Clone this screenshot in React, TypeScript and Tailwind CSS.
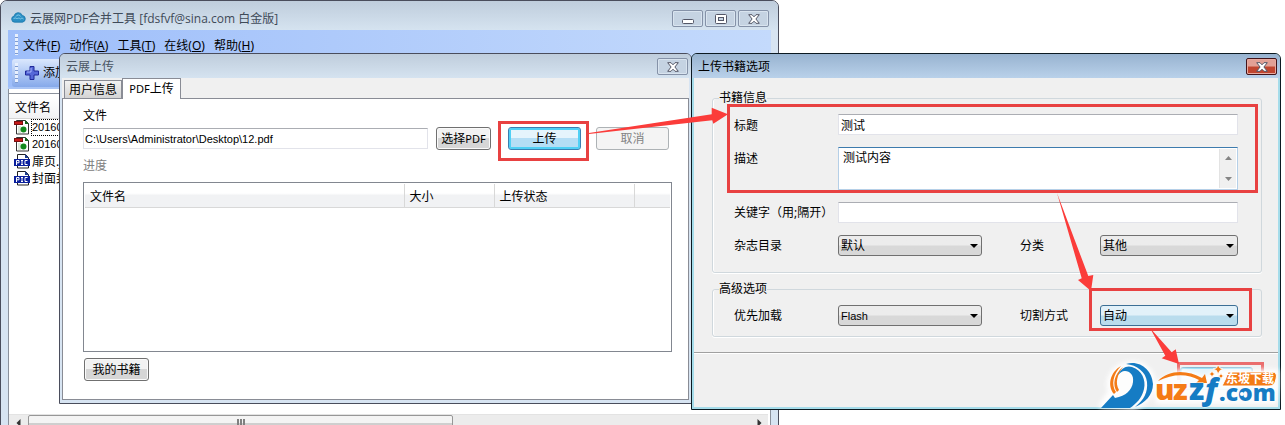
import React from "react";

type Option = { id: string; label: string; value: string; active?: boolean };

const MENUS = [
  { label: "文件", hotkey: "F" },
  { label: "动作", hotkey: "A" },
  { label: "工具", hotkey: "T" },
  { label: "在线", hotkey: "O" },
  { label: "帮助", hotkey: "H" },
];

const FILES = [
  { name: "201603", kind: "pdf", focused: true },
  { name: "201603", kind: "pdf", focused: false },
  { name: "扉页.jpg", kind: "pic", focused: false },
  { name: "封面封底", kind: "pic", focused: false },
];

const uiFont = "font-['Noto_Sans','Noto_Sans_CJK_SC',sans-serif]";
const latinFont = "font-['Liberation_Sans','Noto_Sans_CJK_SC',sans-serif]";

const buttonBase = "h-[23px] rounded-[3px] border text-center text-xs leading-4";
const plainButton =
  "border-[#707070] bg-linear-to-b from-[#f2f2f2] from-50% to-[#d6d6d6] to-50% shadow-[inset_0_0_0_1px_#fafafa]";
const fieldClass =
  "w-full border border-[#e2e3ea] border-t-[#abadb3] bg-white leading-4 text-black outline-none";

function CloseGlyph() {
  return (
    <svg width="12" height="10" viewBox="0 0 12 10" aria-hidden="true">
      <path
        d="M0.7 0.7H4L6 2.8L8 0.7H11.3L7.9 5L11.3 9.3H8L6 7.2L4 9.3H0.7L4.1 5Z"
        fill="#fff"
        stroke="#535666"
        strokeWidth="1"
      />
    </svg>
  );
}

function CaptionButton({
  label,
  danger,
  children,
}: {
  label: string;
  danger?: boolean;
  children: React.ReactNode;
}) {
  return (
    <button
      aria-label={label}
      className={`flex h-[17px] w-[31px] items-center justify-center rounded-[2px] border ${
        danger
          ? "border-[#43141a] bg-linear-to-b from-[#e2a095] from-45% to-[#c0452f] to-55% shadow-[inset_0_0_0_1px_#e8aaa0]"
          : "border-[#8592a8] bg-[#c5d3e2] shadow-[inset_0_0_0_1px_#d9e4ef]"
      }`}
    >
      {children}
    </button>
  );
}

function CloudIcon() {
  return (
    <svg width="15" height="11" viewBox="0 0 15 11" aria-hidden="true">
      <path
        d="M3.6 10.2A3.1 3.1 0 0 1 3 4.1A4.4 4.4 0 0 1 11.4 3.5A3.4 3.4 0 0 1 11.5 10.2Z"
        fill="#2b8fc4"
        stroke="#1c77ab"
        strokeWidth="0.8"
      />
      <path
        d="M2.5 7A2 2 0 0 1 6 7A2 2 0 0 1 9.300 7A2 2 0 0 1 12.500 7M5 4.500A2.500 2.500 0 0 1 9.600 4.500"
        fill="none"
        stroke="#8fd0ec"
        strokeWidth="0.9"
      />
    </svg>
  );
}

function PdfIcon() {
  return (
    <svg width="16" height="16" viewBox="0 0 16 16" aria-hidden="true">
      <path d="M2.5 1.5H11.5L14.5 4.5V15H2.5Z" fill="#fff" stroke="#333" />
      <path d="M11 1V5H15Z" fill="#15651c" />
      <path d="M4 7H7V14H4Z" fill="#dbe8db" />
      <rect x="0.5" y="2.5" width="8" height="3" fill="#c61a1a" stroke="#7a1010" />
      <circle cx="9.5" cy="10.5" r="3" fill="#128a1c" />
    </svg>
  );
}

function PicIcon() {
  return (
    <svg width="16" height="16" viewBox="0 0 16 16" aria-hidden="true">
      <path d="M3.5 1.5H11.5L14.5 4.5V15H3.5Z" fill="#fff" stroke="#222" />
      <path d="M11 1V5H15Z" fill="#1c3c8c" />
      <rect x="0" y="6" width="16" height="7" fill="#0a1f9c" />
      <path d="M2.5 12V7.5H5V9.8H2.5M8 7V12M7 7.5H9M7 11.5H9M13.5 7.5H11V11.5H13.5" fill="none" stroke="#fff" />
    </svg>
  );
}

function Grip() {
  return <span className="my-1 w-[3px] self-stretch bg-[repeating-linear-gradient(to_bottom,#e8f0fd_0_3px,#7d9ad0_3px_4px)]" />;
}

function MainWindow() {
  return (
    <section className="absolute left-0 top-0 flex h-[440px] w-[779px] flex-col rounded-t-[7px] border border-[#4a4d5c] bg-[#d7e4f2] px-[7px] pb-[7px]">
      <header className="-mx-[7px] flex h-[29px] shrink-0 items-start gap-1 rounded-t-[6px] bg-linear-to-b from-[#bfcddc] to-[#d5e3f0] pl-[10px] pr-[9px] pt-[9px]">
        <span className="pt-[2px]">
          <CloudIcon />
        </span>
        <h1 className="flex-1 pt-px text-xs leading-4 text-[#3f4a58] font-['Open_Sans','Noto_Sans_CJK_SC',sans-serif]">
          云展网PDF合并工具 [fdsfvf@sina.com 白金版]
        </h1>
        <div className="flex gap-[2px]">
          <CaptionButton label="最小化">
            <svg width="12" height="10" viewBox="0 0 12 10" aria-hidden="true">
              <rect x="0.5" y="5.5" width="11" height="4" rx="1" fill="#fff" stroke="#535666" />
            </svg>
          </CaptionButton>
          <CaptionButton label="最大化">
            <svg width="12" height="10" viewBox="0 0 12 10" aria-hidden="true">
              <rect x="0.5" y="0.5" width="11" height="9" rx="1" fill="#fff" stroke="#535666" />
              <rect x="3.5" y="3.5" width="5" height="3" fill="#c5d3e2" stroke="#535666" />
            </svg>
          </CaptionButton>
          <CaptionButton label="关闭">
            <CloseGlyph />
          </CaptionButton>
        </div>
      </header>

      <div className="flex shrink-0 flex-col bg-linear-to-r from-[#9ebefa] to-[#c4dafc]">
        <nav className="flex h-[29px] items-center pl-[7px]">
          <Grip />
          <div className="flex gap-[9px] pl-[5px] pt-[2px]">
            {MENUS.map((menu) => (
              <button key={menu.hotkey} className="text-xs leading-4">
                {menu.label}(<u>{menu.hotkey}</u>)
              </button>
            ))}
          </div>
        </nav>
        <div className="ml-1 flex h-[28px] items-center rounded-l-[3px] bg-linear-to-b from-[#dbe8fd] to-[#86a9ea] pl-[3px]">
          <Grip />
          <button className="flex items-center gap-1 pl-[7px] text-xs leading-4">
            <svg width="14" height="14" viewBox="0 0 14 14" aria-hidden="true">
              <path d="M5 0.5H9V5H13.5V9H9V13.5H5V9H0.5V5H5Z" fill="#5568d8" stroke="#20299a" />
              <path d="M6 2V6H2" fill="none" stroke="#aab8ff" />
            </svg>
            添加
          </button>
        </div>
        <div className="h-[2px] bg-[#a9c4f5]" />
      </div>

      <div className="flex min-h-0 flex-1 flex-col border border-t-0 border-[#8b919c] bg-white">
        <div className="mt-1 h-px bg-[#8b919c]" />
        <table className="mt-[3px] w-full text-left text-xs leading-4">
          <thead>
            <tr className="h-[21px] bg-linear-to-b from-white to-[#f1f2f4]">
              <th className="border-b border-[#d5d5d5] p-0 pl-[6px] pt-[2px] font-normal">文件名</th>
            </tr>
          </thead>
          <tbody>
            {FILES.map((file, index) => (
              <tr key={index} className="h-[17px]">
                <td className="p-0 pl-[5px]">
                  <span className="flex items-center gap-px">
                    {file.kind === "pdf" ? <PdfIcon /> : <PicIcon />}
                    <span
                      className={`leading-[15px] ${
                        file.kind === "pdf" ? `text-[11px] ${latinFont}` : "text-xs"
                      } ${file.focused ? "border border-dotted border-black" : "p-px"}`}
                    >
                      {file.name}
                    </span>
                  </span>
                </td>
              </tr>
            ))}
          </tbody>
        </table>
        <div className="mr-[2px] mt-auto flex h-[17px] items-stretch border-t border-[#e3e3e3] bg-[#ececec]">
          <button aria-label="向左滚动" className="flex w-[19px] items-center justify-center">
            <svg width="5" height="8" viewBox="0 0 5 8" aria-hidden="true">
              <path d="M4.5 0V8L0.5 4Z" fill="#333" />
            </svg>
          </button>
          <span className="flex w-[425px] items-start justify-center gap-px rounded-[2px] border border-[#979797] bg-linear-to-b from-[#f4f4f4] from-50% to-[#cfcfcf] to-50% pt-[3px]">
            <span className="h-2 w-[2px] bg-[#808080]" />
            <span className="h-2 w-[2px] bg-[#808080]" />
            <span className="h-2 w-[2px] bg-[#808080]" />
          </span>
          <button aria-label="向右滚动" className="ml-auto flex w-[17px] items-center justify-center">
            <svg width="5" height="8" viewBox="0 0 5 8" aria-hidden="true">
              <path d="M0.5 0V8L4.5 4Z" fill="#333" />
            </svg>
          </button>
        </div>
      </div>
    </section>
  );
}

function UploadDialog() {
  const headCell = "border-b border-[#d8d8d8] p-0 pl-[5px] pt-[3px] font-normal";
  return (
    <section className="absolute left-[59px] top-[53px] flex h-[351px] w-[633px] flex-col rounded-t-[6px] border border-[#4a4d5c] bg-[#d7e4f2] px-[2px] pb-[3px]">
      <header className="-mx-[2px] flex h-[24px] shrink-0 items-start justify-between rounded-t-[5px] bg-linear-to-b from-[#bfcddc] to-[#d5e3f0] pl-[6px] pr-[3px] pt-1">
        <h2 className="pt-px text-xs leading-4 text-[#4a5563]">云展上传</h2>
        <CaptionButton label="关闭">
          <CloseGlyph />
        </CaptionButton>
      </header>
      <div role="tablist" className="flex h-[20px] shrink-0 items-end bg-[#f0f0f0] pl-[2px]">
        <button
          role="tab"
          aria-selected="false"
          className="h-[18px] w-[58px] border border-b-0 border-[#898c95] bg-linear-to-b from-[#f2f2f2] to-[#d4d4d4] pt-px text-xs leading-4"
        >
          用户信息
        </button>
        <button
          role="tab"
          aria-selected="true"
          className="relative -mb-px h-[21px] w-[59px] border border-b-0 border-[#898c95] bg-white text-xs leading-4"
        >
          <span className="text-[11px]">PDF</span>上传
        </button>
      </div>
      <div className="flex min-h-0 flex-1 flex-col border border-[#898c95] bg-white pb-[18px] pl-[20px] pr-[16px] pt-[9px]">
        <label htmlFor="path" className="text-xs leading-4">
          文件
        </label>
        <div className="mt-[3px] flex items-center">
          <input
            id="path"
            defaultValue="C:\Users\Administrator\Desktop\12.pdf"
            className={`${fieldClass} ${latinFont} mr-2 h-[21px] min-w-0 flex-1 px-px text-[11px]`}
          />
          <button className={`${buttonBase} ${plainButton} mr-[17px] w-[55px]`}>
            选择<span className="text-[11px]">PDF</span>
          </button>
          <button
            className={`${buttonBase} mr-[15px] w-[73px] border-[#3c7fb1] bg-linear-to-b from-[#e5f4fc] from-50% to-[#b5def5] to-50% shadow-[inset_0_0_0_2px_#4fd0f5]`}
          >
            上传
          </button>
          <button disabled className={`${buttonBase} mr-[3px] w-[73px] border-[#adb2b5] bg-[#f4f4f4] text-[#838383]`}>
            取消
          </button>
        </div>
        <p className="mt-2 text-xs leading-4 text-[#808080]">进度</p>
        <div className="mt-2 flex-1 border border-[#828790] p-px">
          <table className="w-full table-fixed text-left text-xs leading-4">
            <colgroup>
              <col />
              <col className="w-[90px]" />
              <col className="w-[140px]" />
              <col className="w-[36px]" />
            </colgroup>
            <thead>
              <tr className="h-[23px] bg-linear-to-b from-white from-40% to-[#f1f2f4] to-50%">
                <th className={`${headCell} border-r`}>文件名</th>
                <th className={`${headCell} border-r`}>大小</th>
                <th className={`${headCell} border-r`}>上传状态</th>
                <th className={headCell} />
              </tr>
            </thead>
            <tbody />
          </table>
        </div>
        <button className={`${buttonBase} ${plainButton} ml-px mt-[6px] w-[65px] shrink-0`}>我的书籍</button>
      </div>
    </section>
  );
}

function Dropdown({ id, label, value, active }: Option) {
  const latin = /^[\x20-\x7e]+$/.test(value);
  return (
    <>
      <label htmlFor={id} className="text-xs leading-4">
        {label}
      </label>
      <div className="relative">
        <select
          id={id}
          defaultValue={value}
          className={`h-[21px] w-full appearance-none rounded-[3px] border pl-[2px] leading-4 text-black outline-none ${
            latin ? `text-[11px] ${latinFont}` : "text-xs"
          } ${
            active
              ? "border-[#3c6f95] bg-linear-to-b from-[#e2f1f9] from-45% to-[#b9dced] to-55%"
              : "border-[#707070] bg-linear-to-b from-[#ececec] from-45% to-[#d8d8d8] to-55%"
          }`}
        >
          <option>{value}</option>
        </select>
        <svg className="pointer-events-none absolute right-1 top-[9px]" width="8" height="4" viewBox="0 0 8 4" aria-hidden="true">
          <path d="M0 0H8L4 4Z" fill="#000" />
        </svg>
      </div>
    </>
  );
}

function DropdownRow({ left, right }: { left: Option; right: Option }) {
  return (
    <div className="grid grid-cols-[104px_144px_38px_80px_138px] items-center">
      <Dropdown {...left} />
      <span />
      <Dropdown {...right} />
    </div>
  );
}

function OptionsDialog() {
  const group = "min-w-0 rounded-[3px] border border-[#d0d8dd] pl-[21px] pr-[23px] pt-2 shadow-[inset_1px_0_0_#fff,0_1px_0_#fff]";
  return (
    <section className="absolute left-[691px] top-[53px] flex h-[357px] w-[590px] flex-col rounded-t-[6px] border border-[#0c1a22] bg-[#a5dcea] px-[2px] pb-[2px]">
      <header className="-mx-[2px] flex h-[24px] shrink-0 items-start justify-between rounded-t-[5px] bg-linear-to-b from-[#98b3d0] to-[#b9d1ea] pl-[6px] pr-[3px] pt-1">
        <h2 className="pt-px text-xs leading-4">上传书籍选项</h2>
        <CaptionButton label="关闭" danger>
          <CloseGlyph />
        </CaptionButton>
      </header>
      <form className="flex flex-1 flex-col bg-[#f0f0f0]" onSubmit={(e) => e.preventDefault()}>
        <div className="flex flex-col gap-2 pb-[15px] pl-[18px] pr-[16px] pt-[12px]">
          <fieldset className={`${group} pb-[16px]`}>
            <legend className="-ml-[15px] text-xs leading-4">书籍信息</legend>
            <div className="flex flex-col gap-3">
              <div className="grid grid-cols-[104px_1fr] items-center">
                <label htmlFor="title" className="pt-[2px] text-xs leading-4">标题</label>
                <input id="title" defaultValue="测试" className={`${fieldClass} h-[21px] px-[2px] text-xs`} />
              </div>
              <div className="grid grid-cols-[104px_1fr] items-start">
                <label htmlFor="desc" className="pt-1 text-xs leading-4">描述</label>
                <div className="flex h-[43px] border border-[#b5cfe7] border-t-[#3d7bad] bg-white p-px">
                  <textarea id="desc" defaultValue="测试内容" className="flex-1 resize-none overflow-hidden pl-[3px] pt-px text-xs leading-4 outline-none" />
                  <div className="flex w-[17px] flex-col items-center justify-between border-l border-[#e3e3e3] bg-[#f0f0f0] py-[7px]">
                    <svg width="7" height="4" viewBox="0 0 7 4" aria-hidden="true">
                      <path d="M0 4H7L3.5 0Z" fill="#858585" />
                    </svg>
                    <svg width="7" height="4" viewBox="0 0 7 4" aria-hidden="true">
                      <path d="M0 0H7L3.5 4Z" fill="#858585" />
                    </svg>
                  </div>
                </div>
              </div>
              <div className="grid grid-cols-[104px_1fr] items-center">
                <label htmlFor="keywords" className="whitespace-nowrap text-xs leading-4">关键字（用;隔开）</label>
                <input id="keywords" className={`${fieldClass} h-[21px] px-[2px] text-xs`} />
              </div>
              <DropdownRow
                left={{ id: "catalog", label: "杂志目录", value: "默认" }}
                right={{ id: "category", label: "分类", value: "其他" }}
              />
            </div>
          </fieldset>
          <fieldset className={`${group} pb-[10px]`}>
            <legend className="-ml-[15px] text-xs leading-4">高级选项</legend>
            <DropdownRow
              left={{ id: "preload", label: "优先加载", value: "Flash" }}
              right={{ id: "split", label: "切割方式", value: "自动", active: true }}
            />
          </fieldset>
        </div>
        <footer className="flex flex-1 justify-end border-t border-[#a0a0a0] pr-[25px] pt-[14px] shadow-[inset_0_1px_0_#fff]">
          <button
            aria-label="确定"
            className={`${buttonBase} w-[73px] border-[#8bb9d4] bg-linear-to-b from-[#e5f4fc] from-50% to-[#c5e5f6] to-50% shadow-[inset_0_0_0_1px_#9be2f7]`}
          />
        </footer>
      </form>
    </section>
  );
}

function Annotations() {
  return (
    <svg className="pointer-events-none absolute left-0 top-0" width="1285" height="425" viewBox="0 0 1285 425" aria-hidden="true">
      <g fill="none" stroke="#e84141" strokeWidth="3">
        <rect x="499.5" y="122.5" width="88" height="37" />
        <rect x="728.5" y="105.5" width="528" height="86" />
        <rect x="1090.5" y="289.5" width="160" height="40" />
        <path d="M1178.500 380V363.500H1262.500V380" opacity="0.75" />
      </g>
      <g fill="#fb3c3a">
        <path d="M589 133L711.700 114.300V107.700L728 114.300L713.300 123.700L712.300 120.300L589 134Z" />
        <path d="M1057 193L1081.700 278.300L1078 280L1091 291L1093.300 275L1088.300 276Z" />
        <path d="M1150 328L1165.300 355.700L1161.700 358.300L1179 364L1175.700 349.300L1171.700 352.300Z" />
      </g>
    </svg>
  );
}

function SiteLogo() {
  return (
    <svg className="pointer-events-none absolute left-[1090px] top-[355px]" width="195" height="65" viewBox="0 0 195 65" role="img" aria-label="uzzf.com 东坡下载">
      <defs>
        <filter id="glow" x="-10%" y="-20%" width="120%" height="140%">
          <feGaussianBlur stdDeviation="2" />
        </filter>
      </defs>
      <g fill="#fff" stroke="#fff" strokeWidth="6" strokeLinejoin="round" filter="url(#glow)" opacity="0.9">
        <path d="M12 50L21 37C17 28 20 12 40 9C54 7 63 18 63 30C61 43 50 51 42 52Z" />
        <path d="M68 29L90 17L116 24L130 17H186V30L184 46H68Z" />
      </g>
      <path d="M31 11C20 17 17 31 24 39L26 37C21 30 23 19 31 11Z" fill="#f47b16" />
      <path d="M33 12C24 19 22 30 27 37L29 35C25 28 27 20 33 12Z" fill="#f47b16" />
      <path
        d="M28 20C31 13 37 10 42 12C52 15 56 25 54 34C52 43 46 49 40 53H11L23 40L25 43C36 41 42 35 43 27C44 20 40 16 35 16C32 16 30 18 28 20Z"
        fill="#167cc4"
      />
      <path d="M36 9C50 5 62 15 63 29C63 40 55 48 45 52C54 45 58 37 57 27C56 17 47 10 36 9Z" fill="#167cc4" />
      <path d="M68 26C79 14 98 15 112 23L115 19L117 28L106 28L109 25C98 19 84 18 68 26Z" fill="#f47b16" />
      <g fontFamily="Open Sans, sans-serif" fontWeight="800" stroke="#fff" strokeWidth="1" paintOrder="stroke">
        <text y="45" fontSize="29" fill="#f47b16">
          <tspan x="65">u</tspan>
          <tspan x="83">z</tspan>
        </text>
        <text y="45" fontSize="30" fill="#167cc4">
          <tspan x="99">z</tspan>
          <tspan x="115" fontStyle="italic">f</tspan>
        </text>
        <text x="129" y="46" fontSize="23" fill="#167cc4">.com</text>
      </g>
      <path d="M138 17H182Q188 17 186 24Q185 31 179 31H132Q136 24 138 17Z" fill="#f47b16" stroke="#fff" strokeWidth="1" />
      <text x="136" y="28" fontSize="12" fontWeight="700" fill="#fff" fontFamily="Noto Sans CJK SC, sans-serif">
        东坡下载
      </text>
      <g fill="#f47b16" stroke="#fff" strokeWidth="0.8">
        <path d="M128 10L130 13L133 14L130 15.500L128 19L126.500 15.500L123 14L126.500 13Z" />
        <path d="M122 16L123.200 18L125 19L123.200 20L122 22L120.800 20L119 19L120.800 18Z" />
        <path d="M131 18L132 20L134 21L132 22L131 24L130 22L128 21L130 20Z" />
      </g>
      <circle cx="152" cy="39" r="2" fill="#fff" />
    </svg>
  );
}

export default function App() {
  return (
    <main className={`relative h-screen min-h-[425px] overflow-hidden bg-white text-xs text-black ${uiFont}`}>
      <MainWindow />
      <UploadDialog />
      <OptionsDialog />
      <Annotations />
      <SiteLogo />
    </main>
  );
}
